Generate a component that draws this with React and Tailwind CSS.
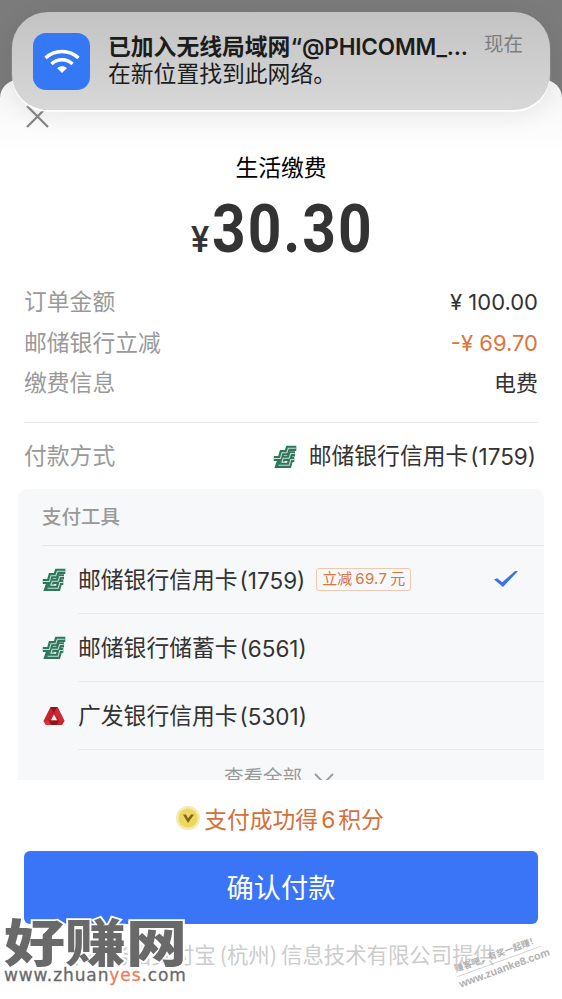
import React from 'react';

const summaryRows = [
  { label: '订单金额', value: '¥ 100.00', color: 'text-[#333333]' },
  { label: '邮储银行立减', value: '-¥ 69.70', color: 'text-[#dc743c]' },
  { label: '缴费信息', value: '电费', color: 'text-[#333333]' },
];

const cards = [
  { bank: 'psbc', name: '邮储银行信用卡', tail: '(1759)', discount: '69.7', selected: true },
  { bank: 'psbc', name: '邮储银行储蓄卡', tail: '(6561)' },
  { bank: 'cgb', name: '广发银行信用卡', tail: '(5301)' },
];

const PostalIcon = () => (
  <svg viewBox="0 0 24 24" className="h-6 w-6 shrink-0" fill="none">
    <g stroke="#2f765b" strokeWidth="5.200">
      <path d="M23.300 3.300H15.200L13.700 7.700H8.900L7.300 13.500H0.800" />
      <path d="M22 8.800H17.500L16 13.300H10L8.800 17" />
      <path d="M21.300 14.500H17.600L16 20.300H5L6.500 16" />
    </g>
    <g stroke="#c9ded6" strokeWidth="1.100">
      <path d="M22.800 3.300H15.300L13.800 7.700H9L7.400 13.500H1" />
      <path d="M21.800 8.500H17.600L16.100 13.300H10.200L9 17H13" />
      <path d="M21 14.500H17.700L16.200 20.300H5.500" />
    </g>
  </svg>
);

const GuangfaIcon = () => (
  <svg viewBox="0 0 24 24" className="h-6 w-6 shrink-0">
    <path d="M8.500 3h7l7 14-2.500 4H4l-2.500-4L8.500 3zM12 10.500L8.800 16.500h6.400L12 10.500z" fill="#c5242c" fillRule="evenodd" />
    <path d="M8.500 3h7L13.500 7.500 12 9zM7 16.500h10L14.500 21H8.500z" fill="#8c161e" />
    <path d="M1.500 17L4 21h5.500L6 16.500z" fill="#d93238" />
    <path d="M15.500 3l7 14h-4.500L12.500 7.500z" fill="#cf2b31" />
  </svg>
);

const WifiIcon = () => (
  <svg viewBox="0 0 36 28" className="w-9" fill="none" stroke="white" strokeWidth="3.400">
    <path d="M1.500 11C10.500 2.300 25.500 2.300 34.500 11" />
    <path d="M7.500 17C13 11.300 23 11.300 28.500 17" />
    <path d="M18 26l-4.800-4.800c2.600-2.500 7-2.500 9.600 0z" fill="white" stroke="none" />
  </svg>
);

const App = () => {
  return (
    <div className="relative flex h-[999px] w-[562px] flex-col overflow-hidden bg-[#7b7b7b] pt-20 font-['Liberation_Sans','Noto_Sans_CJK_SC',sans-serif] text-[#333333]">
      {/* System notification */}
      <div className="absolute left-3 top-3 z-10 flex h-[98px] w-[538px] items-center rounded-[36px] bg-linear-to-b from-[#c3c3c3] to-[#d8d8d8] pl-[21px] pr-[26px] shadow-[0_2px_1px_#ffffff,0_5px_24px_rgba(0,0,0,0.08)]">
        <div className="flex h-[57px] w-[57px] shrink-0 items-center justify-center rounded-[13px] bg-[#3478f6]">
          <WifiIcon />
        </div>
        <div className="ml-[18px] w-[376px] whitespace-nowrap font-['Inter','Noto_Sans_CJK_SC',sans-serif] text-[22.800px] leading-[27px] text-[#1c1c1c]">
          <p className="-mt-0.5 font-semibold">
            已加入无线局域网“<span className="text-[22.500px] tracking-[-0.15px]">@PHICOMM_...</span>
          </p>
          <p>在新位置找到此网络。</p>
        </div>
        <span className="mb-[32px] whitespace-nowrap text-[19.500px] text-[#7d7d7d]">现在</span>
      </div>

      {/* Payment sheet */}
      <div className="flex flex-1 flex-col rounded-t-[18px] bg-linear-to-b from-[#f4f4f4] to-white to-8%">
        <div className="flex h-[70px] items-start pl-[26px] pt-[25px]">
          <svg viewBox="0 0 23 23" className="h-[23px] w-[23px]" stroke="#858585" strokeWidth="2.200">
            <path d="M1 1l21 21M22 1L1 22" />
          </svg>
        </div>
        <h1 className="text-center text-[22.800px] leading-[36px] text-black">生活缴费</h1>
        <div className="flex h-[82px] items-baseline justify-center pt-[3px] font-['Roboto',sans-serif] font-bold leading-[82px]">
          <span className="mr-px w-5 origin-left scale-x-[0.95] text-[36px] font-medium">¥</span>
          <span className="w-[160px] origin-left scale-x-[0.89] whitespace-nowrap text-[66px] tracking-[2.200px]">30.30</span>
        </div>

        <div className="mt-[14px] pl-6 pr-[24px] text-[22.800px] leading-[40.500px]">
          {summaryRows.map((row) => (
            <div key={row.label} className="flex justify-between">
              <span className="text-[#999999]">{row.label}</span>
              <span className={`font-['Inter','Noto_Sans_CJK_SC',sans-serif] text-[22px] ${row.color}`}>{row.value}</span>
            </div>
          ))}
        </div>

        <div className="mx-6 mt-[18px] border-t border-[#e7e8ea]" />
        <div className="flex h-[66px] items-center justify-between pl-6 pr-[26px] pt-0.5 text-[22.800px]">
          <span className="text-[#999999]">付款方式</span>
          <div className="flex items-center">
            <PostalIcon />
            <span className="ml-3">邮储银行信用卡</span>
            <span className="ml-0.5 font-['Inter'] text-[22.500px]">(1759)</span>
          </div>
        </div>

        {/* Card list, cut off above the points line */}
        <div className="mx-[18px] h-[291px] shrink-0 overflow-hidden rounded-t-[10px] bg-[#f6f8fa] pl-6">
          <div className="flex h-[57px] items-center border-b border-[#e4e7ea] pt-0.5 text-[19.500px] font-medium text-[#999999]">支付工具</div>
          {cards.map((card) => (
            <div key={card.tail} className="flex h-[68px] items-center">
              {card.bank === 'psbc' ? <PostalIcon /> : <GuangfaIcon />}
              <div className="ml-3 flex h-full flex-1 items-center border-b border-[#e9ebee] pr-[26px] pt-[3px]">
                <span className="text-[22.800px]">{card.name}</span>
                <span className="ml-0.5 font-['Inter'] text-[22.500px]">{card.tail}</span>
                {card.discount && (
                  <span className="mb-0.5 ml-[11px] flex h-[23px] w-[95px] items-center justify-center rounded-[3px] border border-[#f1c7af] text-[15px] text-[#dc743c]">
                    立减
                    <span className="mx-[3px] font-['Inter'] text-[15px] tracking-[0.3px]">{card.discount}</span>
                    元
                  </span>
                )}
                {card.selected && (
                  <svg viewBox="0 0 24 18" className="mb-1 ml-auto h-[18px] w-6">
                    <path d="M0 9.500l3.200-1.300 5 4L21 1h3L9 17z" fill="#3973ed" />
                  </svg>
                )}
              </div>
            </div>
          ))}
          <div className="mt-[12px] flex items-center justify-center pr-7 text-[19.500px] leading-[30px] text-[#999999]">
            查看全部
            <svg viewBox="0 0 20 12" className="ml-3 mt-1 h-3 w-5" fill="none" stroke="#999999" strokeWidth="1.800">
              <path d="M1 1l9 9 9-9" />
            </svg>
          </div>
        </div>

        <div className="flex h-[71px] shrink-0 items-center justify-center pr-0.5 pt-2.5 text-[22.800px] text-[#d66f38]">
          <svg viewBox="0 0 24 24" className="mb-1 mr-1 h-6 w-6">
            <circle cx="12" cy="12" r="12" fill="#f7e9ac" />
            <circle cx="12" cy="12" r="9.500" fill="#edd75f" />
            <path d="M7 8.500h3l2 4 3-4h3l-6 8.500z" fill="#7b6424" />
          </svg>
          支付成功得<span className="mx-[3px] font-['Inter']">6</span>积分
        </div>
        <button className="mx-6 h-[73px] shrink-0 rounded-[6px] bg-[#3975f6] pt-[5px] text-[27.300px] text-white">确认付款</button>
        <p className="mt-[14px] whitespace-nowrap pl-[66px] font-['Noto_Sans_CJK_SC',sans-serif] text-[21.400px] leading-8 text-[#cccccc]">
          本服务由支付宝<span className="mx-[4px]">(杭州)</span>信息技术有限公司提供
        </p>
      </div>

      {/* Site marks */}
      <div className="absolute left-1 top-[915px] w-[190px] text-[#696969]">
        <div className="h-[53px] origin-center scale-y-[0.84] whitespace-nowrap font-['Noto_Sans_CJK_SC',sans-serif] text-[61px] font-black leading-[49px] [-webkit-text-stroke:4px_white] [paint-order:stroke_fill]">好赚网</div>
        <div className="whitespace-nowrap font-['DejaVu_Sans'] text-[17px] leading-[14px] tracking-[0.9px] [-webkit-text-stroke:0.3px]">
          www.zhuan<span className="text-[#f17b57]">yes</span>.com
        </div>
      </div>
      <div className="absolute left-[454px] top-[947px] w-[90px] -rotate-[20deg] whitespace-nowrap text-center leading-[14px] text-[#b0b0b0]">
        <div className="border-b border-[#d0d0d0] text-[8.800px] font-bold">赚客吧，有奖一起赚！</div>
        <div className="text-[10.800px] font-bold">www.zuanke8.com</div>
      </div>
    </div>
  );
};

export default App;
